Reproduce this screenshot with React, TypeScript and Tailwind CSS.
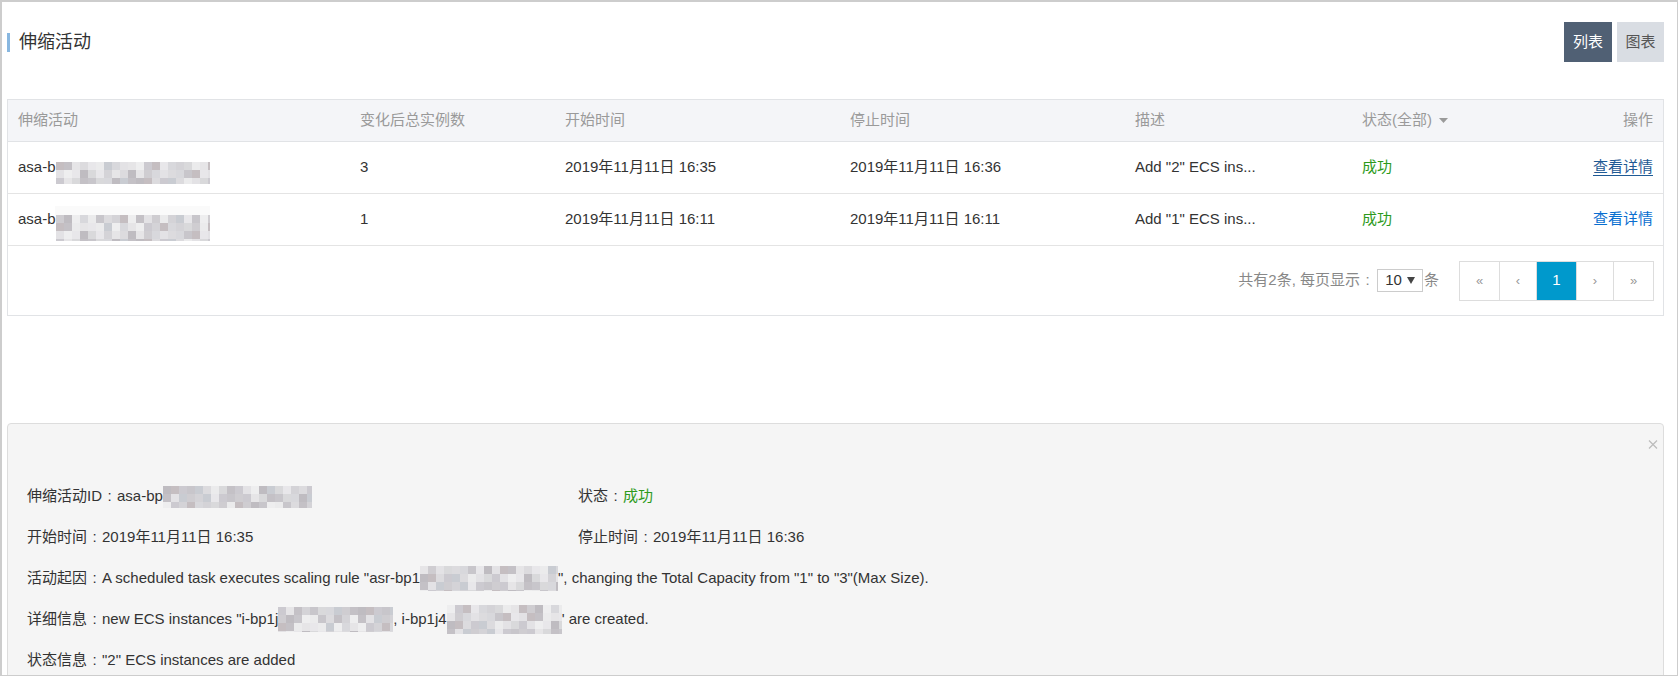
import React from 'react';

const shades = ['#dcdbde', '#cfcdd1', '#e8e7ea', '#c4c1c6', '#d8d8dc', '#cccad0', '#ebebec', '#bfbcc1', '#d4d3d7', '#e3e2e5', '#c8c6cb', '#e6e5e7', '#c9ccd2', '#c5bec1', '#d9d9db', '#eeeeef'];

// pixelated blur that hides ids in the screenshot
const Mosaic = ({ w, h, seed = 0, className = '' }: { w: number; h: number; seed?: number; className?: string }) => {
    const cols = Math.ceil(w / 8);
    const rows = Math.ceil(h / 8);
    const cells = [];
    for (let r = 0; r < rows; r++) {
        for (let c = 0; c < cols; c++) {
            const shade = shades[(c * 37 + r * 91 + seed * 13 + ((c * c + r) % 5)) % shades.length];
            cells.push(<span key={r + '-' + c} className="block" style={{ background: shade }} />);
        }
    }
    return (
        <span
            className={`inline-grid shrink-0 overflow-hidden blur-[0.7px] ${className}`}
            style={{ width: w, height: h, gridTemplateColumns: `repeat(${cols}, 8px)`, gridAutoRows: '8px' }}
        >
            {cells}
        </span>
    );
};

// full-width colon drawn centred, as the original font does
const Colon = () => <span className="inline-block w-[15px] text-center">:</span>;

const cols = 'grid grid-cols-[342px_205px_285px_285px_227px_1fr_110px]';

const rows = [
    { count: '3', start: '2019年11月11日 16:35', stop: '2019年11月11日 16:36', desc: 'Add "2" ECS ins...', hover: true, seed: 1 },
    { count: '1', start: '2019年11月11日 16:11', stop: '2019年11月11日 16:11', desc: 'Add "1" ECS ins...', hover: false, seed: 5 },
];

const PageBtn = ({ children, w, active = false }: { children: React.ReactNode; w: string; active?: boolean }) => (
    <div
        className={`${w} h-full flex items-center justify-center border-l border-[#dddddd] first:border-l-0 ${active ? 'bg-[#0099cc] text-white text-[15px]' : 'text-[#999999] text-[13px]'}`}
    >
        {children}
    </div>
);

export default function App() {
    return (
        <div className="w-[1678px] h-[676px] overflow-hidden bg-white border-t-2 border-l-2 border-r border-b border-[#cdcdcd] flex flex-col pl-[5px] pr-[13px] font-['Liberation_Sans','Noto_Sans_CJK_SC',sans-serif] text-[15px] text-[#333333]">
            {/* title bar */}
            <div className="flex items-center justify-between pt-[20px] mb-[37px]">
                <div className="flex items-center gap-[9px]">
                    <div className="w-[3px] h-[19px] bg-[#88b7e0]" />
                    <h2 className="text-[18px] leading-none text-[#333333]">伸缩活动</h2>
                </div>
                <div className="flex gap-[5px]">
                    <button className="w-[48px] h-[40px] bg-[#506074] text-white text-[15px]">列表</button>
                    <button className="w-[47px] h-[40px] bg-[#d9dde3] text-[#555555] text-[15px]">图表</button>
                </div>
            </div>

            {/* table */}
            <div className="border border-[#e1e3e6]">
                <div className={`${cols} h-[42px] bg-[#f4f5f8] border-b border-[#e1e3e6] items-center text-[#9a9a9a]`}>
                    <div className="pl-[10px]">伸缩活动</div>
                    <div className="pl-[10px]">变化后总实例数</div>
                    <div className="pl-[10px]">开始时间</div>
                    <div className="pl-[10px]">停止时间</div>
                    <div className="pl-[10px]">描述</div>
                    <div className="pl-[10px] flex items-center gap-[7px]">
                        状态(全部)
                        <svg width="9" height="5" viewBox="0 0 9 5"><path d="M0 0h9L4.5 5z" fill="#9a9a9a" /></svg>
                    </div>
                    <div className="pr-[10px] text-right">操作</div>
                </div>

                {rows.map((r, i) => (
                    <div key={i} className={`${cols} h-[52px] border-b border-[#e4e4e4] items-center`}>
                        <div className="pl-[10px] relative flex items-center">
                            asa-b
                            <Mosaic w={154} h={i === 0 ? 22 : 26} seed={r.seed} className={i === 0 ? 'translate-y-[5px]' : 'translate-y-[8px]'} />
                            {r.hover && <div className="absolute left-[47px] top-[50px] w-[155px] h-[15px] bg-[#fafafa]" />}
                        </div>
                        <div className="pl-[10px]">{r.count}</div>
                        <div className="pl-[10px]">{r.start}</div>
                        <div className="pl-[10px]">{r.stop}</div>
                        <div className="pl-[10px]">{r.desc}</div>
                        <div className="pl-[10px] text-[#2d9a1c]">成功</div>
                        <div className="pr-[10px] text-right">
                            <a className={r.hover ? 'text-[#1f5a94] underline underline-offset-[3px]' : 'text-[#0a6fd0]'}>查看详情</a>
                        </div>
                    </div>
                ))}

                <div className="h-[69px] flex items-center justify-end pr-[9px]">
                    <span className="text-[#888888]">共有2条, 每页显示<Colon /></span>
                    <div className="ml-[2px] w-[46px] h-[23px] border border-[#cccccc] flex items-center justify-center gap-[5px] text-[#333333] text-[15px]">
                        10
                        <svg width="8" height="7" viewBox="0 0 8 7"><path d="M0 0h8L4 7z" fill="#444444" /></svg>
                    </div>
                    <span className="text-[#888888] ml-[1px]">条</span>
                    <div className="ml-[20px] h-[40px] flex border border-[#dddddd]">
                        <PageBtn w="w-[39px]">«</PageBtn>
                        <PageBtn w="w-[37px]">‹</PageBtn>
                        <PageBtn w="w-[40px]" active>1</PageBtn>
                        <PageBtn w="w-[37px]">›</PageBtn>
                        <PageBtn w="w-[40px]">»</PageBtn>
                    </div>
                </div>
            </div>

            {/* detail panel */}
            <div className="mt-[107px] h-[300px] shrink-0 border border-[#dddddd] rounded-[4px] bg-[#f5f5f5] pl-[19px] pr-[5px]">
                <div className="flex justify-end pt-[16px]">
                    <svg width="10" height="9" viewBox="0 0 10 9">
                        <path d="M1 0.5l8 8M9 0.5l-8 8" stroke="#bbbbbb" strokeWidth="1.2" />
                    </svg>
                </div>
                <div className="mt-[27px] grid grid-cols-[551px_1fr] auto-rows-[41px] items-center">
                    <div className="flex items-center">
                        伸缩活动ID<Colon />asa-bp
                        <Mosaic w={149} h={22} seed={3} />
                    </div>
                    <div>
                        状态<Colon /><span className="text-[#2d9a1c]">成功</span>
                    </div>
                    <div>开始时间<Colon />2019年11月11日 16:35</div>
                    <div>停止时间<Colon />2019年11月11日 16:36</div>
                    <div className="col-span-2 flex items-center whitespace-pre">
                        活动起因<Colon />A scheduled task executes scaling rule "asr-bp1
                        <Mosaic w={138} h={25} seed={7} />
                        ", changing the Total Capacity from "1" to "3"(Max Size).
                    </div>
                    <div className="col-span-2 flex items-center whitespace-pre">
                        详细信息<Colon />new ECS instances "i-bp1j
                        <Mosaic w={115} h={25} seed={9} />
                        , i-bp1j4
                        <Mosaic w={115} h={29} seed={11} />
                        ' are created.
                    </div>
                    <div className="col-span-2">状态信息<Colon />"2" ECS instances are added</div>
                </div>
            </div>
        </div>
    );
}
